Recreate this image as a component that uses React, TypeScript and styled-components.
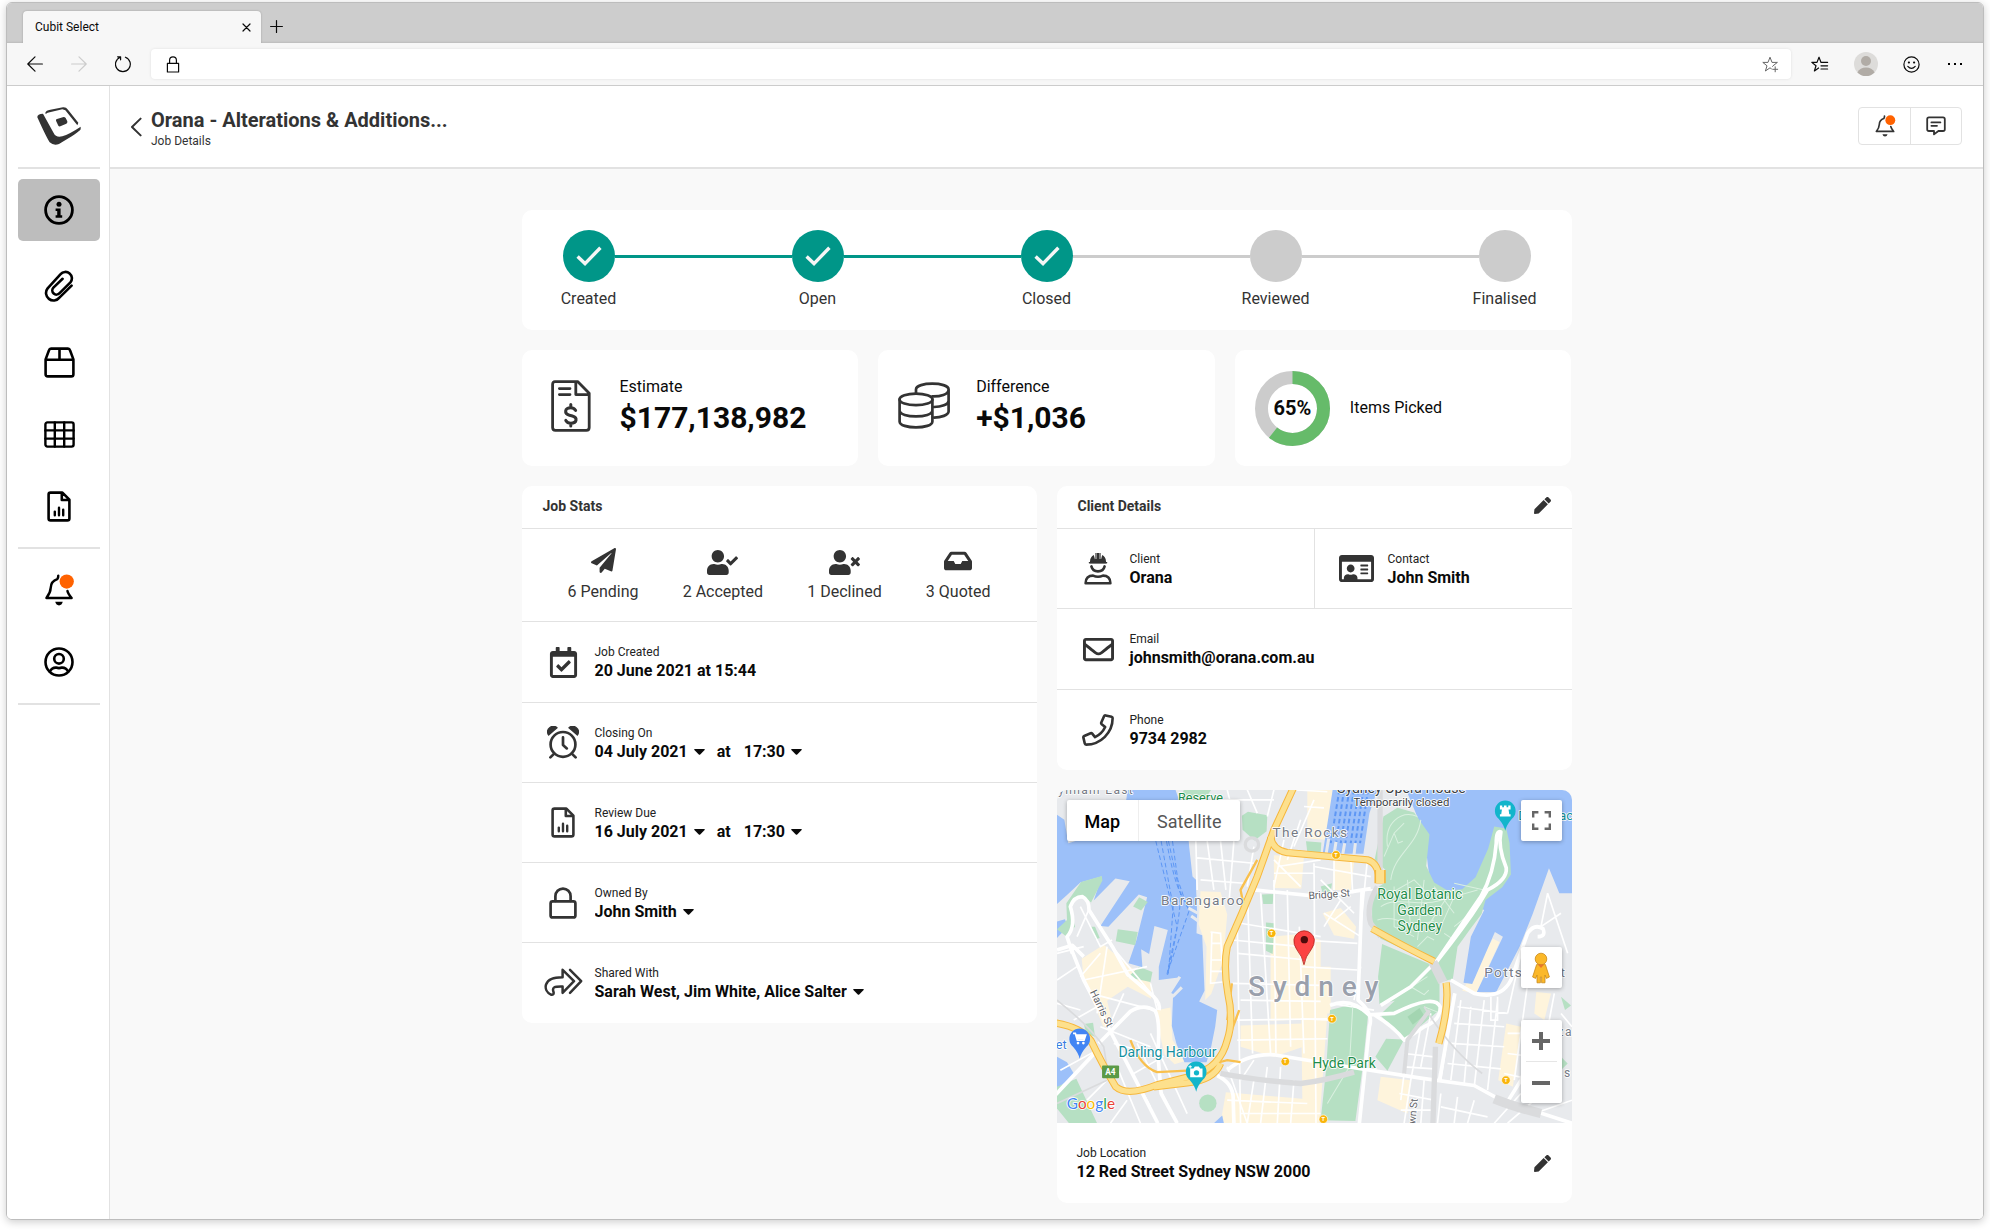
import React from "react";
import styled, { createGlobalStyle } from "styled-components";
import {
  FaInbox,
  FaPaperPlane,
  FaPen,
  FaRegCalendarCheck,
  FaRegEnvelope,
  FaRegIdCard,
  FaUserCheck,
  FaUserTimes,
} from "react-icons/fa";

const color = {
  ink: "#333333",
  black: "#0a0a0a",
  line: "#e2e2e2",
  canvas: "#f9f9f9",
  teal: "#009688",
  grey: "#cccccc",
  green: "#66bb6a",
  orange: "#ff6200",
};

const GlobalStyle = createGlobalStyle`
  *, *::before, *::after { box-sizing: border-box; }
  body {
    margin: 0;
    background: #ffffff;
    color: ${color.black};
    font-family: Roboto, "Liberation Sans", sans-serif;
    font-size: 16px;
  }
  button, input, select { font: inherit; color: inherit; }
  button { background: none; border: 0; padding: 0; cursor: pointer; }
  h1, h2, p, ol, ul, dl, dd { margin: 0; padding: 0; }
  svg { display: block; flex: none; }
`;

/* ---------- browser window ---------- */

const Window = styled.div`
  display: flex;
  flex-direction: column;
  min-height: calc(100vh - 12px);
  margin: 2px 6px 10px;
  border: 1px solid #bdbdbd;
  border-radius: 6px;
  overflow: hidden;
  box-shadow: 0 2px 8px rgba(0, 0, 0, 0.2);
`;

const TabStrip = styled.div`
  display: flex;
  align-items: flex-end;
  height: 40px;
  padding-left: 16px;
  background: #cdcdcd;
  box-shadow: inset 0 -2px 2px -1px #bbbbbb;
`;

const Tab = styled.div`
  display: flex;
  align-items: center;
  justify-content: space-between;
  width: 238px;
  height: 32px;
  padding: 0 10px 0 12px;
  border-radius: 4px 4px 0 0;
  background: #f7f7f7;
  box-shadow: 0 0 2px rgba(0, 0, 0, 0.25);
  font-size: 12px;
`;

const NewTab = styled.button`
  height: 32px;
  padding: 0 9px;
`;

const Toolbar = styled.div`
  display: flex;
  align-items: center;
  height: 43px;
  padding: 0 20px;
  gap: 28px;
  border-bottom: 1px solid #cccccc;
  background: #f7f7f7;
`;

const ToolbarEnd = styled.div`
  display: flex;
  align-items: center;
  gap: 25px;
`;

const AddressBar = styled.div`
  display: flex;
  flex: 1;
  align-items: center;
  height: 30px;
  margin: 0 -8px;
  padding: 0 12px 0 15px;
  border-radius: 4px;
  background: #ffffff;
  box-shadow: 0 0 3px rgba(0, 0, 0, 0.1);
`;

const Address = styled.input`
  flex: 1;
  border: 0;
  outline: 0;
  background: none;
  font-size: 14px;
`;

const IconButton = styled.button<{ $tone?: string }>`
  display: grid;
  place-items: center;
  color: ${(p) => p.$tone ?? "inherit"};
`;

/* ---------- application frame ---------- */

const Shell = styled.div`
  display: flex;
  flex: 1;
  background: #ffffff;
`;

const Sidebar = styled.nav`
  display: flex;
  flex-direction: column;
  width: 103px;
  padding: 0 9px 0 11px;
  border-right: 1px solid ${color.line};
`;

const Brand = styled.a`
  display: flex;
  justify-content: center;
  height: 81px;
  padding-top: 21px;
`;

const Rule = styled.hr`
  width: 100%;
  margin: 0;
  border: 0;
  border-top: 2px solid ${color.line};
`;

const NavGroup = styled.div`
  display: flex;
  flex-direction: column;
  gap: 10px;
  padding: 10px 0;
`;

const NavItem = styled.button<{ $active?: boolean; $after?: number }>`
  display: grid;
  place-items: center;
  width: 100%;
  height: 62px;
  margin-bottom: ${(p) => p.$after ?? 0}px;
  border-radius: 5px;
  background: ${(p) => (p.$active ? "#bdbdbd" : "transparent")};
  color: #000000;
`;

const Body = styled.div`
  display: flex;
  flex: 1;
  flex-direction: column;
  min-width: 0;
`;

const Header = styled.header`
  display: flex;
  align-items: center;
  height: 83px;
  padding: 0 21px 0 20px;
  border-bottom: 2px solid ${color.line};
  color: ${color.ink};
`;

const Titles = styled.div`
  flex: 1;
  padding: 5px 0 0 9px;
`;

const Title = styled.h1`
  font-size: 20px;
  font-weight: 700;
  line-height: 24px;
`;

const Crumb = styled.p`
  font-size: 12px;
  line-height: 18px;
`;

const HeaderActions = styled.div`
  display: flex;
  margin-bottom: 2px;
  border: 1px solid ${color.line};
  border-radius: 4px;
`;

const HeaderAction = styled.button`
  display: grid;
  place-items: center;
  width: 51px;
  height: 36px;

  & + & {
    border-left: 1px solid ${color.line};
  }
`;

const Canvas = styled.main`
  flex: 1;
  padding: 41px 20px 16px;
  background: ${color.canvas};
`;

const Column = styled.div`
  display: flex;
  flex-direction: column;
  gap: 20px;
  max-width: 1050px;
  margin: 0 auto;
`;

const Card = styled.section`
  border-radius: 10px;
  background: #ffffff;
  overflow: hidden;
`;

/* ---------- progress ---------- */

const Steps = styled.ol`
  display: flex;
  height: 120px;
  padding: 20px 27px 0;
  list-style: none;
`;

const Step = styled.li<{ $first: boolean }>`
  display: flex;
  flex: ${(p) => (p.$first ? "none" : "1")};
  color: ${color.ink};
`;

const Connector = styled.span<{ $done: boolean }>`
  flex: 1;
  height: 3px;
  margin: 25px -14px 0;
  background: ${(p) => (p.$done ? color.teal : color.grey)};
`;

const StepBody = styled.div`
  display: flex;
  flex-direction: column;
  align-items: center;
  gap: 6px;
  width: 80px;
  line-height: 22px;
`;

const Dot = styled.span<{ $done: boolean }>`
  display: grid;
  place-items: center;
  width: 52px;
  height: 52px;
  border-radius: 50%;
  background: ${(p) => (p.$done ? color.teal : color.grey)};
`;

/* ---------- summary ---------- */

const Summary = styled.div`
  display: grid;
  grid-template-columns: repeat(3, 1fr);
  gap: 20px;
`;

const SummaryCard = styled(Card)`
  display: flex;
  align-items: center;
  gap: 20px;
  height: 116px;
  padding: 0 20px;
`;

const SummaryIcon = styled.span`
  display: grid;
  place-items: center;
  width: 58px;
  margin-top: -4px;
  color: ${color.ink};
`;

const SummaryText = styled.div`
  line-height: 20px;
`;

const Amount = styled.p`
  font-size: 30px;
  font-weight: 700;
  line-height: 42px;
`;

const Donut = styled.div`
  display: grid;
  place-items: center;
  font-size: 20px;
  font-weight: 700;

  > * {
    grid-area: 1 / 1;
  }
`;

/* ---------- detail cards ---------- */

const Columns = styled.div`
  display: grid;
  grid-template-columns: repeat(2, minmax(0, 1fr));
  align-items: start;
  gap: 20px;
`;

const Stack = styled.div`
  display: flex;
  flex-direction: column;
  gap: 20px;
`;

const CardHead = styled.div`
  display: flex;
  align-items: center;
  justify-content: space-between;
  height: 43px;
  padding: 0 21px 3px;
  border-bottom: 1px solid ${color.line};
  color: ${color.ink};
`;

const CardTitle = styled.h2`
  font-size: 14px;
  font-weight: 700;
`;

const Replies = styled.ul`
  display: flex;
  justify-content: space-between;
  padding: 18px 46px;
  border-bottom: 1px solid ${color.line};
  color: ${color.ink};
  list-style: none;
`;

const Reply = styled.li`
  display: flex;
  flex-direction: column;
  align-items: center;
  gap: 8px;
  line-height: 22px;
`;

const ReplyIcon = styled.span`
  display: grid;
  place-items: center;
  height: 26px;
`;

const Row = styled.div`
  display: flex;
  flex: 1;
  align-items: center;
  min-height: 80px;
  padding: 0 21px 0 20px;

  & + & {
    border-top: 1px solid ${color.line};
  }
`;

const SplitRow = styled.div`
  display: flex;
  border-bottom: 1px solid ${color.line};

  ${Row} {
    min-height: 79px;
  }

  ${Row} + ${Row} {
    border-top: 0;
    border-left: 1px solid ${color.line};
  }
`;

const FieldCard = styled(Card)`
  padding-bottom: 1px;
`;

const RowIcon = styled.span`
  display: grid;
  place-items: center;
  width: 43px;
  margin-right: 10px;
  color: ${color.ink};
`;

const RowText = styled.div`
  flex: 1;
`;

const Label = styled.label`
  display: block;
  color: #222222;
  font-size: 12px;
  line-height: 18px;
`;

const Value = styled.div`
  display: flex;
  align-items: center;
  font-weight: 700;
  line-height: 20px;
  white-space: pre;
`;

const At = styled.span`
  padding: 0 13px 0 12px;
`;

const Picker = styled.span`
  display: inline-grid;
  align-items: center;

  > * {
    grid-area: 1 / 1;
  }

  > svg {
    justify-self: end;
    pointer-events: none;
  }
`;

const PickerSelect = styled.select`
  field-sizing: content;
  appearance: none;
  height: 20px;
  margin: 0;
  padding: 0 17px 0 0;
  border: 0;
  background: none;
  cursor: pointer;
`;

const ValueLink = styled.a`
  color: inherit;
  text-decoration: none;
`;

/* ---------- map ---------- */

const MapFrame = styled.div`
  position: relative;
  height: 333px;
  overflow: hidden;

  > svg {
    width: 100%;
    height: 100%;
  }
`;

const MapControl = styled.div`
  position: absolute;
  border-radius: 2px;
  background: #ffffff;
  box-shadow: 0 1px 4px rgba(0, 0, 0, 0.3);
  color: #666666;
`;

const MapTypes = styled(MapControl)`
  top: 10px;
  left: 10px;
  display: flex;
`;

const MapType = styled.button<{ $on?: boolean }>`
  height: 41px;
  padding: 1px 18px 0;
  color: ${(p) => (p.$on ? "#000000" : "#565656")};
  font-size: 18px;
  font-weight: ${(p) => (p.$on ? 500 : 400)};

  & + & {
    border-left: 1px solid #eeeeee;
  }
`;

const MapSide = styled(MapControl)<{ $bottom?: number }>`
  right: 10px;
  ${(p) => (p.$bottom === undefined ? "top: 10px;" : `bottom: ${p.$bottom}px;`)}
  display: flex;
  flex-direction: column;
  align-items: center;
  width: 41px;
`;

const MapButton = styled.button`
  display: grid;
  place-items: center;
  width: 31px;
  height: 41px;

  & + & {
    height: 42px;
    border-top: 1px solid #e6e6e6;
  }
`;

/* ---------- icons ---------- */

type Glyph = { w: number; h: number; box?: string; sw?: number; children: React.ReactNode };

const Line = ({ w, h, box, sw = 2.6, children }: Glyph) => (
  <svg
    width={w}
    height={h}
    viewBox={box ?? `0 0 ${w} ${h}`}
    fill="none"
    stroke="currentColor"
    strokeWidth={sw}
    strokeLinecap="round"
    strokeLinejoin="round"
    aria-hidden="true"
  >
    {children}
  </svg>
);

const Logo = () => (
  <svg width="44" height="38" viewBox="110 319 132 114" fill="#333333" aria-hidden="true">
    <path d="M111 350Q110 340 128 339L160 397Q167 412 186 407Q208 400 241 378L241 386Q236 395 176 430Q160 436 148 425Q138 410 111 350Z" />
    <path d="M135 336Q137 329 150 327L188 320Q197 319 203 327L234 366L231 374L195 329L186 326L142 336L136 340Z" />
    <path d="M167 360Q166 356 170 355L190 349Q194 349 196 352L201 362Q202 367 198 369L180 377Q176 378 174 375Z" />
  </svg>
);

const InfoIcon = () => (
  <Line w={30} h={30} sw={2.8}>
    <circle cx="15" cy="15" r="13.4" />
    <circle cx="15" cy="9.2" r="2.5" fill="currentColor" stroke="none" />
    <path d="M11.6 13.4h5v6.8h1.6v2.6h-6.6v-2.6h1.6v-4.2h-1.6z" fill="currentColor" stroke="none" />
  </Line>
);

const ClipIcon = () => (
  <Line w={30} h={32} sw={2.6}>
    <path d="M27.6 15.6L15.4 27.6A7.3 7.3 0 0 1 3.6 18.4L16.6 4.2A6.3 6.3 0 0 1 26.4 12.4L15.6 23.2A3.9 3.9 0 0 1 9.4 17.6L18.6 8.8" />
  </Line>
);

const BoxIcon = () => (
  <Line w={31} h={31} sw={2.6}>
    <path d="M1.6 12.4L5 3.2Q5.5 1.6 7 1.6H24Q25.5 1.6 26 3.2L29.4 12.4V27.2Q29.4 29.4 27.2 29.4H3.8Q1.6 29.4 1.6 27.2ZM1.6 12.8H29.4M15.5 1.6V12.8" />
  </Line>
);

const TableIcon = () => (
  <Line w={31} h={27} sw={2.4}>
    <rect x="1.4" y="1.4" width="28.2" height="24.2" rx="2" />
    <path d="M1.4 9.4H29.6M1.4 17.6H29.6M10.8 1.4V25.6M20.2 1.4V25.6" />
  </Line>
);

const ReportIcon = () => (
  <Line w={24} h={31} sw={2.6}>
    <path d="M3.4 1.6H15.4L22.4 8.6V27.4Q22.4 29.4 20.4 29.4H3.6Q1.6 29.4 1.6 27.4V3.6Q1.6 1.6 3.4 1.6ZM14.8 1.8V9H22.2" />
    <path d="M7.8 20.6V24.2M12 16.8V24.2M16.2 18.8V24.2" strokeWidth="2.4" />
  </Line>
);

const BellIcon = ({ size }: { size: number }) => (
  <Line w={size} h={size} box="0 0 32 34" sw={2.6}>
    <path d="M15.2 1.8Q15.4 3.6 14.2 5.4C9.8 6.8 7.4 9.6 7.2 14.6C7 19.4 5.4 22 2.6 25.4H29.4C26.6 22 25.4 20.2 25 18" />
    <path d="M12 29.6H20Q19 33.4 16 33.4T12 29.6Z" fill="currentColor" stroke="none" />
    <circle cx="24.2" cy="8" r="7.6" fill={color.orange} stroke="none" />
  </Line>
);

const UserIcon = () => (
  <Line w={30} h={30} sw={2.6}>
    <circle cx="15" cy="15" r="13.5" />
    <circle cx="15" cy="11.8" r="4.8" />
    <path d="M5.8 24.6Q8 20.4 12 20.6Q15 21.6 18 20.6Q22 20.4 24.2 24.6" />
  </Line>
);

const CommentIcon = () => (
  <Line w={20} h={20} sw={1.8}>
    <path d="M3 1.4H17Q18.8 1.4 18.8 3.2V13.2Q18.8 15 17 15H12.4L8 18.4V15H3Q1.2 15 1.2 13.2V3.2Q1.2 1.4 3 1.4ZM5.4 6.4H14.4M5.4 9.8H11" />
  </Line>
);

const InvoiceIcon = () => (
  <Line w={40} h={52} sw={2.8}>
    <path d="M4 1.6H26.6L38.2 13.2V47.6Q38.2 50.4 35.4 50.4H4.4Q1.6 50.4 1.6 47.6V4.4Q1.6 1.6 4 1.6ZM24.8 2V14.6H38M8.4 8.6H19M8.4 14.6H19" />
    <path
      d="M24.6 30.4Q22.8 27.8 19.8 27.8C13.4 27.8 13 34 18.4 35.2L21.4 36C26.8 37.4 26.2 43.2 19.8 43.2Q16.4 43.2 14.8 40.4M19.8 24.4V27.6M19.8 43.4V46"
      strokeWidth="3"
    />
  </Line>
);

const CoinsIcon = () => (
  <Line w={58} h={48} sw={2.7}>
    <ellipse cx="18" cy="17.4" rx="16.4" ry="5.8" />
    <path d="M1.6 17.4V39.4C1.6 47.4 34.4 47.4 34.4 39.4V17.4M1.6 28.6C1.6 36.4 34.4 36.4 34.4 28.6" />
    <path d="M18 10.6V7.4C18 -.2 50.6 -.2 50.6 7.4C50.6 12.6 42 14.6 34.4 14.4M50.6 7.4V29.6C50.6 33 43 35.6 36 35.6M50.6 18.4C50.6 22.6 43 25 36 25" />
  </Line>
);

const AlarmIcon = () => (
  <Line w={32} h={33} sw={2.7}>
    <circle cx="16" cy="18.4" r="12.4" />
    <path d="M16 11.4V19L19.8 22.4M7.2 27.6L3.4 31.4M24.8 27.6L28.6 31.4" />
    <path d="M1.6 9A5.6 5.6 0 0 1 10 1.8ZM30.4 9A5.6 5.6 0 0 0 22 1.8Z" fill="currentColor" strokeWidth="1.4" />
  </Line>
);

const LockIcon = () => (
  <Line w={28} h={32} sw={2.7}>
    <rect x="1.6" y="14.4" width="24.8" height="16" rx="2" />
    <path d="M6.4 14V9.2A7.6 7.6 0 0 1 21.6 9.2V14" />
  </Line>
);

const ShareIcon = () => (
  <Line w={39} h={29} sw={2.5}>
    <path d="M18.6 1.8L30 13.2L18.6 24.8V18.4C10.6 18.2 7.6 19 9.6 24.2Q10 27 7.4 26.8C2.4 24.6 1 20.2 2 16.6C4 10.6 9.6 9.6 18.6 9.2Z" />
    <path d="M26 1.8L37.2 13.2L26 24.8" />
  </Line>
);

const WorkerIcon = () => (
  <Line w={28} h={33} sw={2.6}>
    <path
      d="M6 11.2V9.6C6 6.4 7.6 4 9.8 3L11 7.4V1H17V7.4L18.2 3C20.4 4 22 6.4 22 9.6V11.2Z"
      fill="currentColor"
      stroke="none"
    />
    <path d="M5.4 10.8H22.6" strokeWidth="1.4" />
    <path d="M12 1.4V6.6M16 1.4V6.6" stroke="#ffffff" strokeWidth=".8" />
    <path d="M7.4 14.4C9 21 19 21 20.6 14.4" />
    <path d="M1.6 31.2C1.4 26 4.6 23.6 9 23.6Q14 26 19 23.6C23.4 23.6 26.6 26 26.4 31.2Z" />
  </Line>
);

const PhoneIcon = () => (
  <Line w={32} h={32} box="-24 -24 560 560" sw={46}>
    <path d="M493.4 24.6l-104-24c-11.3-2.6-22.9 3.3-27.5 13.9l-48 112c-4.2 9.8-1.4 21.3 6.9 28l60.6 49.6c-36 76.7-98.9 140.5-177.2 177.2l-49.6-60.6c-6.8-8.3-18.2-11.1-28-6.9l-112 48C3.9 366.5-2 378.1.6 389.4l24 104C27.1 504.2 36.7 512 48 512c256.1 0 464-207.5 464-464 0-11.2-7.7-20.9-18.6-23.4z" />
  </Line>
);

const Caret = () => (
  <svg width="11" height="6" viewBox="0 0 11 6" fill="currentColor" aria-hidden="true">
    <path d="M.6 0H10.4Q11 .4 10.6.9L6.2 5.6Q5.5 6.1 4.8 5.6L.4.9Q0 .4.6 0Z" />
  </svg>
);

const Pegman = () => (
  <svg width="18" height="32" viewBox="0 0 18 32" fill="#fbb829" stroke="#c98a1b" strokeWidth=".8" aria-hidden="true">
    <path d="M4.6 12.6H13.4L17.4 25L14.4 26.4L13 23V30.8H9.6V25H8.4V30.8H5V23L3.6 26.4L.6 25Z" />
    <circle cx="9" cy="7" r="5.8" />
    <path d="M5.8 12.6H12.2L9 16Z" fill="#e8762c" stroke="none" />
  </svg>
);

/* ---------- map drawing ---------- */

const waters = [
  "M50 105L72 120L84 190L245 140L262 30H405L440 130L446 200L456 290L467 300V335L470 400L468 460L485 466L492 632L476 664L530 690L524 740L512 800L498 846H432L408 792L394 738L398 642L386 636L420 592L355 600V560L382 450L342 438L326 522L302 508L306 562L264 550L288 480L320 352L295 344L204 440L180 438L268 304L225 296L160 362L184 290L120 308L80 345L50 372Z",
  "M50 425L74 418L82 440L50 474Z",
  "M50 830L80 846L104 886L50 924Z",
  "M876 30H1010L986 100L968 222H846Z",
  "M1096 30H1593V340H1555L1524 265L1476 400L1436 500L1366 636H1308L1386 470L1362 456L1294 612L1268 608L1290 470L1330 390L1170 330L1150 160Z",
  "M520 1029L545 1006L550 1029Z",
];

const parks = [
  "M604 108L622 96L680 106L678 154L642 182L606 150Z",
  "M430 30H512L490 62H420Z",
  "M50 448L80 420L78 370L122 306L184 288L186 302L152 368L124 346L88 372L104 440L76 468Z",
  "M296 352L322 366L302 392L278 380Z",
  "M232 448L292 456L284 496L226 484Z",
  "M262 592L296 560L336 576L330 606Z",
  "M152 440H164L178 474L166 478Z",
  "M50 920L108 896L170 1029H86L50 985Z",
  "M130 732L158 728L164 770L138 760Z",
  "M664 344L700 342L696 372L668 372Z",
  "M676 428L702 430L696 522L676 512Z",
  "M796 184L842 188L840 222L800 218Z",
  "M1028 110L1070 84L1120 98L1166 164L1156 258L1180 308L1220 332L1264 328L1304 292L1342 206L1360 140L1396 146L1406 190L1410 284L1384 322L1334 360L1322 402L1286 450L1250 500L1236 596L1210 604L1176 548L1020 476L994 440L994 334L1030 310L1034 270L1002 238Z",
  "M1024 492L1166 552L1196 612V690L1112 760L1090 778L1050 738L1018 704L1062 662L1016 672L1012 590Z",
  "M868 690L930 674L982 704L966 860L944 1022L840 1020L856 870Z",
  "M1090 778L1040 872L1004 830L1036 776Z",
  "M840 320L874 310L870 336L846 338Z",
  "M1560 650L1590 676L1572 690Z",
  "M1560 830L1580 850L1562 868Z",
];

const blocks = [
  "M480 334L540 336L560 404L548 540L512 642L494 660L498 500L474 432Z",
  "M124 536L190 494L244 540L332 610V656L262 620L200 662L214 720L190 742L130 600Z",
  "M342 692L390 682L396 780L436 842L402 852L372 822Z",
  "M700 226L790 230L782 326L700 324Z",
  "M690 470L780 462L840 480V716L690 722Z",
  "M800 30H876L856 180L800 176Z",
  "M780 560H870V700H860L836 1029H786Z",
  "M556 936L836 960L830 1029H540Z",
  "M600 736L790 730L788 800L700 830L600 800Z",
  "M846 400L900 384L946 440L940 476L880 466Z",
  "M880 236L940 246L930 330L876 330Z",
  "M1306 640L1264 632L1356 476L1376 486Z",
  "M1396 730L1440 740L1416 920L1372 900Z",
  "M1486 636L1530 640L1510 720L1480 700Z",
  "M1020 890L1110 900L1100 1000L1010 960Z",
];

const minorRoads = [
  "M466 184L470 330M500 184L520 330M540 184L556 330M580 184L566 360M470 234L640 250M480 300L610 310",
  "M590 420L600 1029M622 380L636 820M660 340L690 820M700 300L706 820M740 330L750 800M776 440L790 820M820 250L826 1029",
  "M600 430L840 470M590 520L800 540M576 610L840 616M590 720L860 716M590 780L860 776M576 480L780 500M600 660L840 664",
  "M700 240L780 320M712 260L840 240M730 180L700 320M780 120L740 240M820 60L760 200M700 280H820M756 30L860 36M790 80L850 84",
  "M840 300L940 400M850 400L960 470M900 360L850 440M880 420L930 380M780 480L950 490M780 560L950 570M930 230L936 340M880 240V330M820 260L990 290",
  "M130 600L320 560M150 640L340 690M170 680L100 720M200 500L170 700M250 640L210 730M330 610L350 690M110 560L50 600M50 670L120 690M180 740L330 800M220 790L370 830M60 870L170 810",
  "M180 520L120 590M215 500L340 650M120 380L180 500L215 480M145 390L110 470M50 520L130 500",
  "M200 900L140 960M260 960L210 1029M250 830L330 980M290 790L410 1029M230 860L300 1029M330 760L440 1000M280 880L350 840",
  "M560 860L620 1029M640 900L620 1029M680 860L660 1029M720 860L710 1029M760 900L750 1029M560 960L800 970M600 1000H840M600 900L640 840",
  "M510 456L540 460L545 560M514 456L510 610L546 606M510 540H545M514 490H540M512 574H545",
  "M980 240L960 440M1000 330H960M960 560L940 660M870 670L1000 690M780 716L870 720",
  "M1100 800L1080 960M1140 740L1110 900M1170 700L1140 860M1090 820L1180 830M1090 860L1180 866M1076 940L1180 960M1110 900L1090 1029M1150 900L1140 1029M1080 990H1180",
  "M1240 640L1200 900M1260 660L1230 900M1290 680L1270 910M1330 660L1300 920M1370 660L1340 930M1250 680L1400 700M1240 730L1390 740M1230 790L1390 800M1220 850L1380 866M1350 650V720H1370V650",
  "M1200 940L1190 1029M1250 950L1240 1029M1300 960L1280 1029M1200 980L1340 1010M1440 520L1400 700M1470 540L1420 900M1400 760H1480M1400 820L1480 830M1390 880L1480 900M1480 960L1400 1029M1440 940L1360 1029M1500 440L1560 400M1520 340L1500 440M1520 340L1580 520M1540 640L1510 800M1560 700L1593 740M1480 1000L1593 960",
  "M620 320L640 200M560 30L590 150M620 30L650 100M700 30L680 110M510 60H700",
];

const parkPaths = [
  "M1030 230L1060 160L1090 130M1060 160L1072 190L1086 184M1050 300C1060 220 1130 200 1140 120M1050 340L1120 300L1160 340M1020 380C1080 340 1160 400 1240 340M1010 420C1080 400 1100 460 1180 420M1060 320V440L1120 470M1100 300L1110 460M1150 300L1130 480M1180 320L1240 400M1220 350L1160 440M1200 440L1240 350L1310 330M1130 500L1160 470L1180 480M1040 200C1030 130 1080 90 1130 110M1240 440L1290 400M1210 460L1240 480M1240 310L1330 330",
  "M1110 620L1150 644L1164 630M936 680L926 860L860 970M1150 680L1200 700M1050 660L1160 590",
];

const mainRoads = [
  "M96 520L80 470Q108 440 90 380Q100 350 126 350Q146 360 146 390L216 500L262 584L340 650Q360 670 356 690",
  "M90 500L130 600L260 850L352 1029",
  "M50 510L96 496L130 530",
  "M175 790L270 694Q310 670 344 692Q360 720 352 820L362 940L410 1029",
  "M40 950L160 822",
  "M560 870Q620 820 700 824L860 850L1140 894L1300 916L1380 960L1593 1029",
  "M530 886Q580 910 578 960L580 1029",
  "M964 330L952 660Q1000 700 986 740L956 1029",
  "M868 676Q930 650 984 704L1060 700Q1180 640 1198 680Q1200 720 1150 740L1090 780Q1060 740 1000 704",
  "M1190 540L1110 620L1020 676M1176 560L1230 490Q1300 400 1340 330Q1400 300 1396 264Q1370 200 1380 156Q1366 150 1366 190Q1360 280 1320 350L1190 540",
  "M1230 600L1300 640Q1380 660 1410 600L1460 460Q1480 430 1506 446Q1516 470 1490 470",
  "M1390 980L1440 900L1500 740",
  "M840 350L990 326",
  "M640 330L840 350",
  "M1242 640L1196 900",
];

const highways = [
  "M765 10L700 150L650 290L604 400L560 500Q548 560 562 640Q580 720 560 780Q540 860 460 886L350 914Q260 950 226 920Q190 860 152 782Q120 740 40 728",
  "M690 170Q694 210 740 218L980 240Q1016 250 1016 310",
  "M994 446Q1090 500 1180 544",
  "M1216 608Q1226 680 1194 790",
  "M540 850Q520 900 440 908L340 920",
];

const thinHighways = ["M650 240L600 330L610 380", "M574 610L560 720M596 690L570 760M270 780Q300 860 350 876L470 870Q520 850 560 840L600 846"];

const tunnels = [
  "M1018 20V270",
  "M1010 320Q974 380 990 430L1020 470",
  "M1176 546L1206 604",
  "M1184 800L1176 1040",
  "M540 880Q640 900 780 910Q860 900 940 876",
];

const ferries = [
  "M346 184L410 440L378 590",
  "M362 184L398 380L384 580",
  "M378 184Q400 300 420 340Q420 420 380 590",
  "M384 184L416 330L446 392L380 580",
  "M396 184L412 300L440 380",
];

const stations: [number, number][] = [
  [693, 460],
  [734, 844],
  [886, 225],
  [874, 716],
  [848, 1017],
  [1395, 900],
];

const halo = { stroke: "#ffffff", strokeWidth: 5, paintOrder: "stroke" as const, strokeLinejoin: "round" as const };

const Pin = ({ x, y, fill, children }: { x: number; y: number; fill: string; children: React.ReactNode }) => (
  <g transform={`translate(${x} ${y})`}>
    <path d="M0 88Q-4 70 -20 52A31 31 0 1 1 20 52Q4 70 0 88Z" fill={fill} />
    {children}
  </g>
);

const CityMap = () => (
  <svg viewBox="50 30 1543 999" preserveAspectRatio="xMidYMid slice" role="img" aria-label="Map of Sydney">
    <rect x="0" y="0" width="1700" height="1100" fill="#e8eaed" />
    {blocks.map((d) => <path key={d} d={d} fill="#fef4dc" />)}
    {waters.map((d) => <path key={d} d={d} fill="#9cc0f9" />)}
    {parks.map((d) => <path key={d} d={d} fill="#b6e0c3" />)}
    <circle cx="502" cy="969" r="26" fill="#b6e0c3" />
    <path d="M1100 710L1136 684L1150 706L1116 734Z" fill="#a3d5b1" />
    <g fill="none" stroke="#5e97f4" strokeWidth="3" strokeDasharray="14 8">
      {ferries.map((d) => <path key={d} d={d} />)}
      <path d="M896 30L870 190M910 30L886 190M926 30L900 190M940 30L914 190M954 30L930 190M968 30L944 190M982 30L958 190" strokeWidth="6" />
    </g>
    <g fill="none" stroke="#e8eaed" strokeWidth="9">
      <path d="M864 176L856 224M886 186L880 224M912 190L906 224M944 190L940 224M444 384L472 400M452 408L474 424M386 640L418 590M396 650L424 622" />
    </g>
    <g fill="none" stroke="#ffffff" strokeWidth="5">
      {minorRoads.map((d) => <path key={d} d={d} />)}
    </g>
    <g fill="none" stroke="#daf0e0" strokeWidth="3">
      {parkPaths.map((d) => <path key={d} d={d} />)}
    </g>
    <g fill="none" stroke="#ffffff" strokeWidth="11" strokeLinejoin="round">
      {mainRoads.map((d) => <path key={d} d={d} />)}
    </g>
    <g fill="none" stroke="#dadbdd" strokeWidth="16">
      {tunnels.map((d) => <path key={d} d={d} />)}
      <path d="M1176 546L1206 606" strokeWidth="28" />
      <path d="M1360 956Q1420 980 1500 1000" strokeWidth="28" />
      <path d="M1166 690L1100 780L1090 880" strokeWidth="12" />
      <path d="M1150 680Q1230 810 1324 880M50 660Q150 740 190 800L200 860M50 970L200 900" strokeWidth="5" />
      <circle cx="634" cy="194" r="20" strokeWidth="10" />
    </g>
    <g fill="none" strokeLinejoin="round">
      {highways.map((d) => <path key={d} d={d} stroke="#f6b73c" strokeWidth="22" />)}
      {thinHighways.map((d) => <path key={d} d={d} stroke="#f9c04d" strokeWidth="7" />)}
      {highways.map((d) => <path key={d} d={d} stroke="#fde08d" strokeWidth="16" />)}
      <path d="M1018 270V310" stroke="#f6b73c" strokeWidth="34" />
      <path d="M1018 270V310" stroke="#fde08d" strokeWidth="24" />
    </g>

    {stations.map(([x, y]) => (
      <g key={`${x}-${y}`}>
        <circle cx={x} cy={y} r="13" fill="#f9b50b" stroke="#ffffff" strokeWidth="2" />
        <text x={x} y={y + 6} fontSize="17" fontWeight="700" fill="#ffffff" textAnchor="middle">T</text>
      </g>
    ))}

    <g fontFamily="Roboto, sans-serif" {...halo}>
      <g fill="#757a85" fontSize="41" letterSpacing="4">
        <text x="54" y="42" fontSize="36">ynham East</text>
        <text x="362" y="376">Barangaroo</text>
        <text x="696" y="172">The Rocks</text>
        <text x="1330" y="590">Potts Point</text>
        <text x="1500" y="768" fontSize="36">Eliza</text>
        <text x="1569" y="892" fontSize="36">s</text>
      </g>
      <text x="622" y="648" fontSize="84" fontWeight="500" letterSpacing="24" fill="#9aa0ac">Sydney</text>
      <g fill="#1e8e4a" fontSize="42" textAnchor="middle">
        <text x="480" y="66" fontSize="38">Reserve</text>
        <text x="1137" y="356">Royal Botanic</text>
        <text x="1137" y="404">Garden</text>
        <text x="1137" y="452">Sydney</text>
        <text x="910" y="865">Hyde Park</text>
      </g>
      <g fill="#3c4043" textAnchor="middle">
        <text x="1082" y="40" fontSize="42">Sydney Opera House</text>
        <text x="1082" y="78" fontSize="34">Temporarily closed</text>
      </g>
      <text x="234" y="832" fontSize="42" fill="#1290a0">Darling Harbour</text>
      <text y="122" fontSize="40" fill="#1290a0">
        <tspan x="1432">D</tspan>
        <tspan x="1554">ac</tspan>
      </text>
      <text x="46" y="806" fontSize="38" fill="#3b7de0">et</text>
      <g fill="#5f6368" fontSize="31">
        <text transform="translate(804 358) rotate(-4)">Bridge St</text>
        <text transform="translate(148 636) rotate(64)">Harris St</text>
        <text transform="translate(1118 1080) rotate(-84)">Crown St</text>
      </g>
    </g>

    <rect x="185" y="856" width="51" height="38" rx="3" fill="#5b9a46" />
    <text x="210" y="884" fontSize="25" fontWeight="700" fill="#ffffff" textAnchor="middle">A4</text>

    <Pin x={118} y={748} fill="#4285f4">
      <path d="M-20 12H-13L-7 32H13L18 17H-10" fill="none" stroke="#ffffff" strokeWidth="5" />
      <path d="M-10 17H18L13 30H-7Z" fill="#ffffff" />
      <circle cx="-5" cy="41" r="4" fill="#ffffff" />
      <circle cx="11" cy="41" r="4" fill="#ffffff" />
    </Pin>
    <Pin x={467} y={847} fill="#12b5cb">
      <path d="M-18 18H-8L-4 12H8L12 18H19V44H-18Z" fill="#ffffff" />
      <circle cx="1" cy="31" r="8" fill="#12b5cb" />
      <path d="M-18 8V18M-23 13H-13" stroke="#ffffff" strokeWidth="3" />
    </Pin>
    <Pin x={1393} y={65} fill="#12b5cb">
      <path d="M-16 12H-9V17H-4V12H4V17H9V12H16V24H10L12 38H16V45H-16V38H-12L-10 24H-16Z" fill="#ffffff" />
    </Pin>

    <path d="M790 554Q786 530 768 508Q758 494 760 478A31 31 0 0 1 821 478Q822 494 812 508Q794 530 790 554Z" fill="#fc4343" stroke="#b3231c" strokeWidth="2.5" />
    <circle cx="791" cy="479" r="11" fill="#4e0b0b" />

    <text x="79" y="986" fontSize="46" fontFamily="Lato, Roboto, sans-serif" {...halo}>
      <tspan fill="#4285f4">G</tspan>
      <tspan fill="#ea4335">o</tspan>
      <tspan fill="#fbbc04">o</tspan>
      <tspan fill="#4285f4">g</tspan>
      <tspan fill="#34a853">l</tspan>
      <tspan fill="#ea4335">e</tspan>
    </text>
  </svg>
);

/* ---------- composed parts ---------- */

const Dropdown = ({ id, name, options }: { id?: string; name?: string; options: string[] }) => (
  <Picker>
    <PickerSelect id={id} aria-label={name} defaultValue={options[0]}>
      {options.map((o) => (
        <option key={o}>{o}</option>
      ))}
    </PickerSelect>
    <Caret />
  </Picker>
);

type FieldProps = { icon?: React.ReactNode; label: string; htmlFor?: string; children: React.ReactNode; action?: React.ReactNode };

const Field = ({ icon, label, htmlFor, children, action }: FieldProps) => (
  <Row>
    {icon && <RowIcon>{icon}</RowIcon>}
    <RowText>
      <Label as={htmlFor ? "label" : "span"} htmlFor={htmlFor}>
        {label}
      </Label>
      <Value>{children}</Value>
    </RowText>
    {action}
  </Row>
);

const EditButton = ({ name }: { name: string }) => (
  <IconButton aria-label={name}>
    <FaPen size={17} color={color.ink} />
  </IconButton>
);

const steps = [
  { name: "Created", done: true },
  { name: "Open", done: true },
  { name: "Closed", done: true },
  { name: "Reviewed", done: false },
  { name: "Finalised", done: false },
];

const replies = [
  { text: "6 Pending", icon: <FaPaperPlane size={25} /> },
  { text: "2 Accepted", icon: <FaUserCheck size={31} /> },
  { text: "1 Declined", icon: <FaUserTimes size={31} /> },
  { text: "3 Quoted", icon: <FaInbox size={28} /> },
];

const BrowserChrome = () => (
  <>
    <TabStrip>
      <Tab>
        Cubit Select
        <IconButton aria-label="Close tab">
          <Line w={9} h={9} sw={1.2}><path d="M1 1L8 8M8 1L1 8" /></Line>
        </IconButton>
      </Tab>
      <NewTab aria-label="New tab">
        <Line w={14} h={14} sw={1.2}><path d="M6.5 .6V12.4M.6 6.5H12.4" /></Line>
      </NewTab>
    </TabStrip>
    <Toolbar>
      <IconButton aria-label="Back">
        <Line w={16} h={16} sw={1.2}><path d="M15.4 8H.8M8 .8L.8 8L8 15.2" /></Line>
      </IconButton>
      <IconButton aria-label="Forward" $tone="#cccccc">
        <Line w={16} h={16} sw={1.2}><path d="M.6 8H15.2M8 .8L15.2 8L8 15.2" /></Line>
      </IconButton>
      <IconButton aria-label="Reload">
        <Line w={16} h={17} box="1 1 16 17" sw={1.2}><path d="M3.6 1.8H6.6V4.8M6.4 2.2A7.4 7.4 0 1 0 11.4 2.2" /></Line>
      </IconButton>
      <AddressBar>
        <Line w={14} h={17} sw={1.2}><path d="M1.4 7.4H12.6V16H1.4ZM3.6 7.4V4.2A3.4 3.4 0 0 1 10.4 4.2V7.4" /></Line>
        <Address type="text" aria-label="Address" />
        <IconButton aria-label="Add to favourites" $tone="#666666">
          <Line w={17} h={17} sw={1}>
            <path d="M10.6 10.4L11 9.8L15.4 6.4H10L8 1.2L6 6.4H.8L5 9.8L3.4 15L8 11.8L9.4 12.8M13.2 10.8V15.8M10.7 13.3H15.7" />
          </Line>
        </IconButton>
      </AddressBar>
      <ToolbarEnd>
        <IconButton aria-label="Favourites">
          <Line w={18} h={17} sw={1.2}>
            <path d="M10 6.4L8 1.2L6 6.4H.8L5 9.8L3.4 15L7.6 12M10 6.4H16.6M10 9.8H16.6M10 13H16.6" />
          </Line>
        </IconButton>
        <IconButton aria-label="Profile">
          <svg width="24" height="24" viewBox="0 0 24 24" aria-hidden="true">
            <circle cx="12" cy="12" r="12" fill="#dddcda" />
            <circle cx="12" cy="9" r="5" fill="#b1aca6" />
            <path d="M3.4 20.4Q6 15.6 12 15.6T20.6 20.4Q17 24 12 24T3.4 20.4Z" fill="#b1aca6" />
          </svg>
        </IconButton>
        <IconButton aria-label="Feedback">
          <Line w={17} h={17} sw={1.2}>
            <circle cx="8.5" cy="8.5" r="7.6" />
            <path d="M4.8 10.4Q8.5 14.4 12.2 10.4" />
            <path d="M5.8 6.4H6M11 6.4H11.2" strokeWidth="2" />
          </Line>
        </IconButton>
        <IconButton aria-label="More">
          <svg width="18" height="4" viewBox="-3 0 18 4" aria-hidden="true">
            <path d="M0 1H2V3H0ZM6 1H8V3H6ZM12 1H14V3H12Z" />
          </svg>
        </IconButton>
      </ToolbarEnd>
    </Toolbar>
  </>
);

const SideNav = () => (
  <Sidebar aria-label="Main">
    <Brand href="#" aria-label="Cubit Select home"><Logo /></Brand>
    <Rule />
    <NavGroup>
      <NavItem $active $after={4} aria-label="Job details"><InfoIcon /></NavItem>
      <NavItem $after={4} aria-label="Attachments"><ClipIcon /></NavItem>
      <NavItem aria-label="Packages"><BoxIcon /></NavItem>
      <NavItem aria-label="Comparison"><TableIcon /></NavItem>
      <NavItem aria-label="Reports"><ReportIcon /></NavItem>
    </NavGroup>
    <Rule />
    <NavGroup>
      <NavItem aria-label="Notifications"><BellIcon size={32} /></NavItem>
      <NavItem aria-label="Account"><UserIcon /></NavItem>
    </NavGroup>
    <Rule />
  </Sidebar>
);

const Progress = () => (
  <Card>
    <Steps>
      {steps.map((s, i) => (
        <Step key={s.name} $first={i === 0}>
          {i > 0 && <Connector $done={s.done} />}
          <StepBody>
            <Dot $done={s.done}>
              {s.done && (
                <svg width="26" height="20" viewBox="0 0 26 20" fill="none" stroke="#f5f5f5" strokeWidth="3.4" aria-hidden="true">
                  <path d="M1.6 10.6L9 17.6L24.4 1.8" />
                </svg>
              )}
            </Dot>
            {s.name}
          </StepBody>
        </Step>
      ))}
    </Steps>
  </Card>
);

const picked = 0.607;
const ring = 2 * Math.PI * 31;

const Totals = () => (
  <Summary>
    <SummaryCard>
      <SummaryIcon><InvoiceIcon /></SummaryIcon>
      <SummaryText>
        Estimate
        <Amount>$177,138,982</Amount>
      </SummaryText>
    </SummaryCard>
    <SummaryCard>
      <SummaryIcon><CoinsIcon /></SummaryIcon>
      <SummaryText>
        Difference
        <Amount>+$1,036</Amount>
      </SummaryText>
    </SummaryCard>
    <SummaryCard>
      <Donut>
        <svg width="75" height="75" viewBox="0 0 75 75" fill="none" strokeWidth="13" aria-hidden="true">
          <circle cx="37.5" cy="37.5" r="31" stroke={color.grey} />
          <circle cx="37.5" cy="37.5" r="31" stroke={color.green} strokeDasharray={`${ring * picked} ${ring}`} transform="rotate(-90 37.5 37.5)" />
        </svg>
        <span>65%</span>
      </Donut>
      <SummaryText>Items Picked</SummaryText>
    </SummaryCard>
  </Summary>
);

const JobStats = () => (
  <FieldCard>
    <CardHead>
      <CardTitle>Job Stats</CardTitle>
    </CardHead>
    <Replies>
      {replies.map((r) => (
        <Reply key={r.text}>
          <ReplyIcon>{r.icon}</ReplyIcon>
          {r.text}
        </Reply>
      ))}
    </Replies>
    <Field icon={<FaRegCalendarCheck size={31} />} label="Job Created">20 June 2021 at 15:44</Field>
    <Field icon={<AlarmIcon />} label="Closing On" htmlFor="closing-date">
      <Dropdown id="closing-date" options={["04 July 2021", "05 July 2021"]} />
      <At>at</At>
      <Dropdown name="Closing time" options={["17:30", "18:00"]} />
    </Field>
    <Field icon={<ReportIcon />} label="Review Due" htmlFor="review-date">
      <Dropdown id="review-date" options={["16 July 2021", "17 July 2021"]} />
      <At>at</At>
      <Dropdown name="Review time" options={["17:30", "18:00"]} />
    </Field>
    <Field icon={<LockIcon />} label="Owned By" htmlFor="owner">
      <Dropdown id="owner" options={["John Smith", "Jim White"]} />
    </Field>
    <Field icon={<ShareIcon />} label="Shared With" htmlFor="shared">
      <Dropdown id="shared" options={["Sarah West, Jim White, Alice Salter"]} />
    </Field>
  </FieldCard>
);

const ClientDetails = () => (
  <FieldCard>
    <CardHead>
      <CardTitle>Client Details</CardTitle>
      <EditButton name="Edit client details" />
    </CardHead>
    <SplitRow>
      <Field icon={<WorkerIcon />} label="Client">Orana</Field>
      <Field icon={<FaRegIdCard size={35} />} label="Contact">John Smith</Field>
    </SplitRow>
    <Field icon={<FaRegEnvelope size={31} />} label="Email">
      <ValueLink href="mailto:johnsmith@orana.com.au">johnsmith@orana.com.au</ValueLink>
    </Field>
    <Field icon={<PhoneIcon />} label="Phone">
      <ValueLink href="tel:97342982">9734 2982</ValueLink>
    </Field>
  </FieldCard>
);

const Location = () => (
  <Card>
    <MapFrame>
      <CityMap />
      <MapTypes>
        <MapType $on>Map</MapType>
        <MapType>Satellite</MapType>
      </MapTypes>
      <MapSide>
        <MapButton aria-label="Full screen">
          <svg width="19" height="19" viewBox="0 0 19 19" fill="none" stroke="currentColor" strokeWidth="2.4" aria-hidden="true">
            <path d="M1.2 6.4V1.2H6.4M12.6 1.2H17.8V6.4M17.8 12.6V17.8H12.6M6.4 17.8H1.2V12.6" />
          </svg>
        </MapButton>
      </MapSide>
      <MapSide $bottom={135}>
        <MapButton aria-label="Street View"><Pegman /></MapButton>
      </MapSide>
      <MapSide $bottom={20}>
        <MapButton aria-label="Zoom in">
          <svg width="18" height="18" viewBox="0 0 18 18" fill="none" stroke="currentColor" strokeWidth="4" aria-hidden="true"><path d="M9 0V18M0 9H18" /></svg>
        </MapButton>
        <MapButton aria-label="Zoom out">
          <svg width="18" height="4" viewBox="0 0 18 4" fill="currentColor" aria-hidden="true"><path d="M0 0H18V4H0Z" /></svg>
        </MapButton>
      </MapSide>
    </MapFrame>
    <Field label="Job Location" action={<EditButton name="Edit job location" />}>
      12 Red Street Sydney NSW 2000
    </Field>
  </Card>
);

export default function App() {
  return (
    <>
      <GlobalStyle />
      <Window>
        <BrowserChrome />
        <Shell>
          <SideNav />
          <Body>
            <Header>
              <IconButton aria-label="Back to jobs">
                <Line w={12} h={20} sw={2}><path d="M10.6 1.6L2 10L10.6 18.4" /></Line>
              </IconButton>
              <Titles>
                <Title>Orana - Alterations &amp; Additions...</Title>
                <Crumb>Job Details</Crumb>
              </Titles>
              <HeaderActions>
                <HeaderAction aria-label="Notifications"><BellIcon size={22} /></HeaderAction>
                <HeaderAction aria-label="Messages"><CommentIcon /></HeaderAction>
              </HeaderActions>
            </Header>
            <Canvas>
              <Column>
                <Progress />
                <Totals />
                <Columns>
                  <JobStats />
                  <Stack>
                    <ClientDetails />
                    <Location />
                  </Stack>
                </Columns>
              </Column>
            </Canvas>
          </Body>
        </Shell>
      </Window>
    </>
  );
}
